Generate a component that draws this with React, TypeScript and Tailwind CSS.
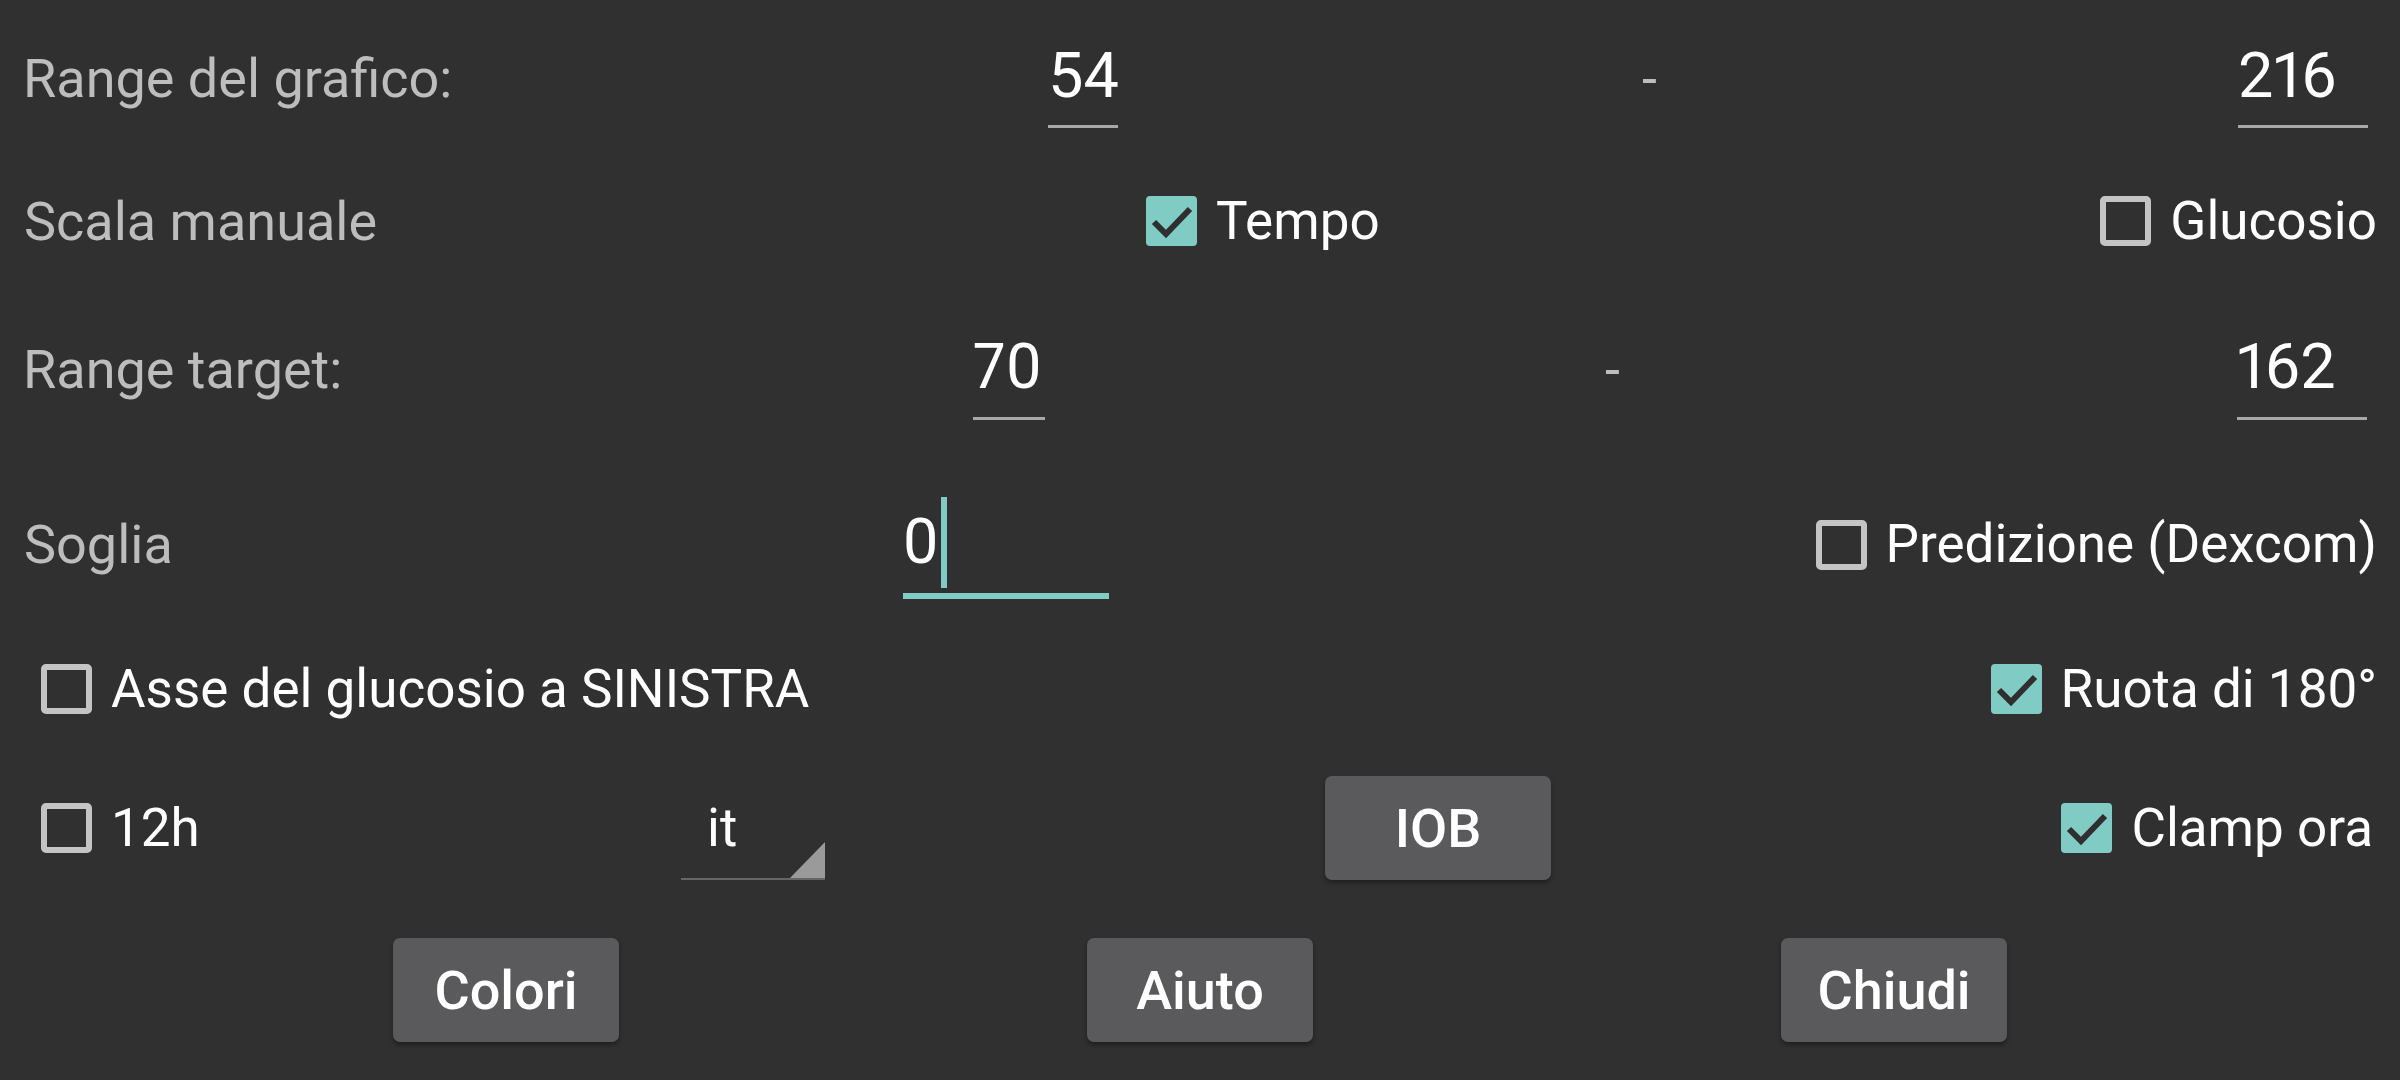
import React from "react";

const font = "font-['Roboto','Noto_Sans',sans-serif]";

function CheckBox({ checked }: { checked: boolean }) {
  if (checked) {
    return (
      <div className="w-[51px] h-[50px] rounded-[4px] bg-[#80cbc4] shrink-0 flex items-center justify-center">
        <svg width="51" height="50" viewBox="0 0 51 50">
          <path d="M8 26 L20 38 L44 13" fill="none" stroke="#2f2f2f" strokeWidth="6" />
        </svg>
      </div>
    );
  }
  return <div className="w-[51px] h-[50px] rounded-[5px] border-[6px] border-[#c4c4c4] shrink-0" />;
}

function Check({ checked, label }: { checked: boolean; label: string }) {
  return (
    <div className="flex items-center gap-[19px]">
      <CheckBox checked={checked} />
      <span className="text-white text-[53px] leading-[63px]">{label}</span>
    </div>
  );
}

function Field({ value, width, pb }: { value: string; width: string; pb: string }) {
  return (
    <div className={`${width} ${pb} border-b-[3px] border-[#a8a8a8] text-white text-[63px] leading-[63px] proportional-nums`}>
      {value}
    </div>
  );
}

function Btn({ label }: { label: string }) {
  return (
    <button className="w-[226px] h-[104px] rounded-[7px] bg-[#5a5a5c] text-white text-[54px] font-medium shadow-[0_3px_4px_rgba(0,0,0,0.35)] flex items-center justify-center">
      {label}
    </button>
  );
}

export default function App() {
  return (
    <div className={`${font} w-[2400px] h-[1080px] bg-[#303030] overflow-hidden pt-[44px]`}>
      {/* Range del grafico */}
      <div className="flex items-baseline pl-[23px]">
        <span className="w-[1025px] text-[#bdbdbd] text-[54px] leading-[63px]">Range del grafico:</span>
        <Field value="54" width="w-[70px]" pb="pb-[18px]" />
        <span className="ml-[524px] w-[17px] text-[#bdbdbd] text-[54px] leading-[63px]">-</span>
        <div className="ml-[579px]">
          <Field value="216" width="w-[130px]" pb="pb-[18px]" />
        </div>
      </div>

      {/* Scala manuale */}
      <div className="flex items-center h-[186px] pl-[24px] pr-[23px]">
        <span className="w-[1122px] text-[#bdbdbd] text-[54px] leading-[63px]">Scala manuale</span>
        <Check checked label="Tempo" />
        <div className="ml-auto">
          <Check checked={false} label="Glucosio" />
        </div>
      </div>

      {/* Range target */}
      <div className="flex items-baseline pl-[23px] mt-[21px]">
        <span className="w-[950px] text-[#bdbdbd] text-[54px] leading-[63px]">Range target:</span>
        <Field value="70" width="w-[72px]" pb="pb-[19px]" />
        <span className="ml-[560px] w-[17px] text-[#bdbdbd] text-[54px] leading-[63px]">-</span>
        <div className="ml-[615px]">
          <Field value="162" width="w-[130px]" pb="pb-[19px]" />
        </div>
      </div>

      {/* Soglia */}
      <div className="flex items-baseline pl-[24px] pr-[23px] mt-[90px]">
        <span className="w-[879px] text-[#bdbdbd] text-[54px] leading-[63px]">Soglia</span>
        <div className="w-[206px] pb-[20px] border-b-[6px] border-[#80cbc4] text-white text-[63px] leading-[63px]">
          <span className="relative">
            0
            <span className="absolute left-full top-[-8px] ml-[3px] w-[6px] h-[91px] bg-[#80cbc4]" />
          </span>
        </div>
        <div className="ml-auto self-start mt-[3px]">
          <Check checked={false} label="Predizione (Dexcom)" />
        </div>
      </div>

      {/* Asse del glucosio */}
      <div className="flex items-center h-[180px] pl-[41px] pr-[23px]">
        <Check checked={false} label="Asse del glucosio a SINISTRA" />
        <div className="ml-auto">
          <Check checked label="Ruota di 180°" />
        </div>
      </div>

      {/* 12h / lingua / IOB / Clamp */}
      <div className="flex items-center h-[98px] pl-[41px] pr-[27px]">
        <div className="w-[640px]">
          <Check checked={false} label="12h" />
        </div>
        <div className="relative w-[144px] pt-[20px] pb-[18px] pl-[26px] border-b-[2px] border-[#666666] text-white text-[53px] leading-[63px]">
          it
          <svg className="absolute right-0 bottom-0" width="35" height="36" viewBox="0 0 35 36">
            <polygon points="35,0 35,36 0,36" fill="#9a9a9a" />
          </svg>
        </div>
        <div className="ml-[500px]">
          <Btn label="IOB" />
        </div>
        <div className="ml-auto">
          <Check checked label="Clamp ora" />
        </div>
      </div>

      {/* Bottoni */}
      <div className="flex justify-center gap-[468px] mt-[61px]">
        <Btn label="Colori" />
        <Btn label="Aiuto" />
        <Btn label="Chiudi" />
      </div>
    </div>
  );
}
